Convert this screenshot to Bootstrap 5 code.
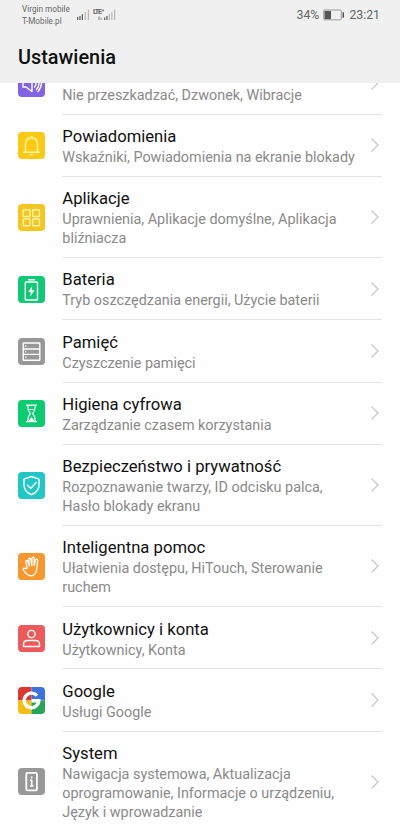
<!DOCTYPE html>
<html lang="pl">
<head>
<meta charset="utf-8">
<meta name="viewport" content="width=device-width, initial-scale=1">
<title>Ustawienia</title>
<link href="https://cdn.jsdelivr.net/npm/bootstrap@5.3.0/dist/css/bootstrap.min.css" rel="stylesheet">
<style>
body{font-family:Roboto,"Noto Sans",sans-serif;background:#fefefe;color:#111;height:831px;overflow:hidden}
.top-area{height:82.5px;background:#f0f0f0;z-index:2}
.status-line{height:30px;padding:0 20px 0 22px;color:#666}
.carrier{font-size:8.2px;line-height:12px;width:54px;padding-top:3px;white-space:nowrap}
.status-right{font-size:12.3px;line-height:30px}
.page-title{font-size:19.9px;font-weight:500;line-height:24px;padding:16px 18px 0;margin:0}
.settings{margin-top:-30.2px}
.setting{height:62.25px;padding-left:18px}
.setting.two{height:81.2px}
.setting.three{height:100.2px}
.tile{width:27px;height:27px;margin-right:17.3px;flex:none;border-radius:4px;overflow:hidden}
.tile svg{display:block;fill:none;stroke:#fff;stroke-width:1.4;stroke-linecap:round;stroke-linejoin:round}
.label-box{height:100%;width:320px;padding-top:11.4px;border-bottom:1px solid #e3e3e3;position:relative}
.setting:first-child .label-box{padding-top:33.6px}
.setting:last-child .label-box{border:0}
.name{font-size:16.65px;line-height:22px;margin:0;font-weight:400;white-space:nowrap}
.note{font-size:14.4px;line-height:19px;margin:0;color:#8a8a8a;white-space:nowrap}
.arrow{position:absolute;right:2px;top:50%;margin-top:-8px;fill:none;stroke:#c4c4c4;stroke-width:1.1}
</style>
<script src="https://cdn.jsdelivr.net/npm/bootstrap@5.3.0/dist/js/bootstrap.bundle.min.js"></script>
</head>
<body>
<header class="top-area position-relative">
  <div class="status-line d-flex justify-content-between">
    <div class="d-flex">
      <div class="carrier">Virgin mobile<br>T-Mobile.pl</div>
      <svg width="42" height="30" viewBox="76 0 42 30" fill="#666"><path d="M77 17h1.300v3H77zM79.300 16h1.300v4h-1.300zM81.700 14.300H83V20h-1.300z"/><path fill="#bbb" d="M84.700 12H86v8h-1.300zM87.800 9.500h1.300V20h-1.300z"/><text x="93" y="14" font-size="7" font-weight="700" textLength="9">LTE</text><text x="101.800" y="12" font-size="4.500" font-weight="700">+</text><path d="M104 17.500h1.300V20H104zM106.300 16h1.300v4h-1.300z"/><path fill="#bbb" d="M98 16.500h2.500V20H98zM100.800 18h1.500v2h-1.500zM108.700 14h1.300v6h-1.300zM111.200 12h1.300v8h-1.300zM114 9.500h1.300V20H114z"/></svg>
    </div>
    <div class="status-right d-flex align-items-center">
      <span>34%</span>
      <svg class="mx-1" width="22" height="12" viewBox="0 0 22 12"><rect x=".7" y="1" width="17.600" height="9.800" rx="1" fill="none" stroke="#999"/><path fill="#555" d="M1.500 2h6.500v8H1.500zM19.500 3.200H21v5.600h-1.500z"/></svg>
      <span>23:21</span>
    </div>
  </div>
  <h1 class="page-title">Ustawienia</h1>
</header>
<main class="settings">
  <div class="setting d-flex align-items-center"><div class="tile" style="background:#8163e4"><svg width="27" height="27"><path d="M5 10v7h3l6 4.500v-16L8 10zM16.500 10.500q3 3 0 6.500M18.500 8q5 5.500 0 11.500M21 6q5.500 7.500-1 15.500"/></svg></div><div class="label-box"><p class="note">Nie przeszkadzać, Dzwonek, Wibracje</p><svg class="arrow" width="10" height="16"><path d="M1.500 1.500 8 8l-6.500 6.500"/></svg></div></div>
  <div class="setting d-flex align-items-center"><div class="tile" style="background:#fac915"><svg width="27" height="27" style="stroke:#fff6a8"><path d="M5.500 20.300h16M7.500 20v-7.500c0-4 2-6.700 6-6.700s6 2.700 6 6.700V20M13.500 4.500v1M12.500 22.600h2"/></svg></div><div class="label-box"><h2 class="name">Powiadomienia</h2><p class="note">Wskaźniki, Powiadomienia na ekranie blokady</p><svg class="arrow" width="10" height="16"><path d="M1.500 1.500 8 8l-6.500 6.500"/></svg></div></div>
  <div class="setting two d-flex align-items-center"><div class="tile" style="background:#f3c623"><svg width="27" height="27" style="stroke:#fff3a6"><rect x="5.200" y="5.700" width="6.800" height="6.800" rx=".8"/><rect x="14.700" y="5.700" width="6.800" height="6.800" rx=".8"/><rect x="5.200" y="15" width="6.800" height="6.800" rx=".8"/><rect x="14.700" y="15" width="6.800" height="6.800" rx=".8"/></svg></div><div class="label-box"><h2 class="name">Aplikacje</h2><p class="note">Uprawnienia, Aplikacje domyślne, Aplikacja<br>bliźniacza</p><svg class="arrow" width="10" height="16"><path d="M1.500 1.500 8 8l-6.500 6.500"/></svg></div></div>
  <div class="setting d-flex align-items-center"><div class="tile" style="background:#10c877"><svg width="27" height="27"><rect x="7.300" y="6" width="12.200" height="18" rx=".8"/><path d="M10.500 3.700h6"/><path fill="#fff" stroke="none" d="m14.200 10-4 6h2.700l-.7 4.500 4.300-6.300h-2.700z"/></svg></div><div class="label-box"><h2 class="name">Bateria</h2><p class="note">Tryb oszczędzania energii, Użycie baterii</p><svg class="arrow" width="10" height="16"><path d="M1.500 1.500 8 8l-6.500 6.500"/></svg></div></div>
  <div class="setting d-flex align-items-center"><div class="tile" style="background:#989898"><svg width="27" height="27"><rect x="5.200" y="5" width="16.600" height="17.300" rx=".6"/><path d="M5.500 11h16M5.500 16.400h16M7.600 8h.2M7.600 13.700h.2M7.600 19.300h.2"/></svg></div><div class="label-box"><h2 class="name">Pamięć</h2><p class="note">Czyszczenie pamięci</p><svg class="arrow" width="10" height="16"><path d="M1.500 1.500 8 8l-6.500 6.500"/></svg></div></div>
  <div class="setting d-flex align-items-center"><div class="tile" style="background:#0bcb70"><svg width="27" height="27" style="stroke-width:1.200"><path d="M8.500 5.200h10M8.500 21.700h10M9.700 5.500c0 5 1 6 2.700 8-1.700 2-2.700 3-2.700 8M17.300 5.500c0 5-1 6-2.700 8 1.700 2 2.700 3 2.700 8M11.700 9.500h3.600"/><path fill="#fff" stroke="none" d="M10.700 21l2.800-4 2.800 4z"/></svg></div><div class="label-box"><h2 class="name">Higiena cyfrowa</h2><p class="note">Zarządzanie czasem korzystania</p><svg class="arrow" width="10" height="16"><path d="M1.500 1.500 8 8l-6.500 6.500"/></svg></div></div>
  <div class="setting two d-flex align-items-center"><div class="tile" style="background:#22c6c5"><svg width="27" height="27"><path d="M13.500 4.500 21 7.200v6c0 4.500-3 7.600-7.500 9.500C9 20.800 6 17.700 6 13.200v-6zM9.500 13.200l3.200 3.200 5.500-5.900"/></svg></div><div class="label-box"><h2 class="name">Bezpieczeństwo i prywatność</h2><p class="note">Rozpoznawanie twarzy, ID odcisku palca,<br>Hasło blokady ekranu</p><svg class="arrow" width="10" height="16"><path d="M1.500 1.500 8 8l-6.500 6.500"/></svg></div></div>
  <div class="setting two d-flex align-items-center"><div class="tile" style="background:#f6982f"><svg width="27" height="27" style="stroke-width:1.300"><path d="M9.300 14.800 7.800 9c-.4-1.600 1.600-2.100 2.100-.6l1.500 4.600-.8-6.600c-.2-1.600 1.900-1.900 2.200-.3l1 6.300.2-7c.1-1.600 2.200-1.600 2.200.1v7l1.300-5.400c.4-1.600 2.400-1.100 2.200.5l-.9 7.900c-.5 5-2.700 7.300-6 7.300-3.300 0-5.200-2.600-7.300-5.600-1-1.500.9-2.800 2.100-1.600z"/></svg></div><div class="label-box"><h2 class="name">Inteligentna pomoc</h2><p class="note">Ułatwienia dostępu, HiTouch, Sterowanie<br>ruchem</p><svg class="arrow" width="10" height="16"><path d="M1.500 1.500 8 8l-6.500 6.500"/></svg></div></div>
  <div class="setting d-flex align-items-center"><div class="tile" style="background:#ec5b5c"><svg width="27" height="27"><circle cx="13.500" cy="9" r="3.600"/><path d="M5.500 21.500v-2c0-2.500 1.500-4 4-4h8c2.500 0 4 1.500 4 4v2z"/></svg></div><div class="label-box"><h2 class="name">Użytkownicy i konta</h2><p class="note">Użytkownicy, Konta</p><svg class="arrow" width="10" height="16"><path d="M1.500 1.500 8 8l-6.500 6.500"/></svg></div></div>
  <div class="setting d-flex align-items-center"><div class="tile"><svg width="27" height="27"><g stroke="none"><path fill="#da3832" d="M0 0h13.500v13.500H0z"/><path fill="#3d73dc" d="M13.500 0H27v13.500H13.500z"/><path fill="#f5bd16" d="M0 13.500h13.500V27H0z"/><path fill="#27a457" d="M13.500 13.500H27V27H13.500z"/></g><path stroke-width="3.400" stroke-linecap="butt" stroke-linejoin="miter" d="M19 8.600A7.300 7.300 0 1 0 20.800 13.700H13.500"/></svg></div><div class="label-box"><h2 class="name">Google</h2><p class="note">Usługi Google</p><svg class="arrow" width="10" height="16"><path d="M1.500 1.500 8 8l-6.500 6.500"/></svg></div></div>
  <div class="setting three d-flex align-items-center"><div class="tile" style="background:#989898"><svg width="27" height="27"><rect x="8.300" y="4.800" width="10.600" height="17.600" rx="1.200" stroke-width="1.800"/><path stroke-linecap="butt" stroke-width="1.600" d="M13.700 8.500v2M12 12.300h1.700v5.500M12 18h3.500"/></svg></div><div class="label-box"><h2 class="name">System</h2><p class="note">Nawigacja systemowa, Aktualizacja<br>oprogramowanie, Informacje o urządzeniu,<br>Język i wprowadzanie</p><svg class="arrow" width="10" height="16"><path d="M1.500 1.500 8 8l-6.500 6.500"/></svg></div></div>
</main>
</body>
</html>
